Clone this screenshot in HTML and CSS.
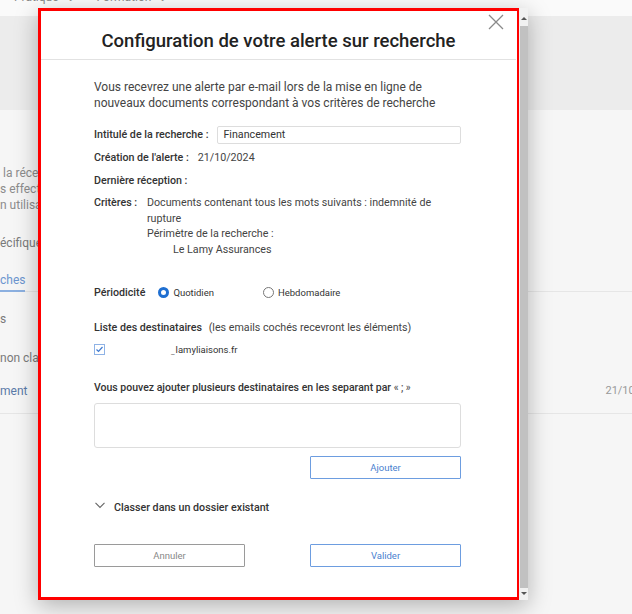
FILE: index.html
```html
<!DOCTYPE html>
<html>
<head>
    <title>Alerte sur recherche</title>
    <link rel="stylesheet" href="styles.css">
</head>
<body>
    <div class="topbar">
        <span class="nav-item">Pratique <span class="caret">&#8964;</span></span>
        <span class="nav-item">Formation <span class="caret">&#8964;</span></span>
    </div>
    <div class="band"></div>
    <div class="page">
        <div class="side">
            <p class="muted first">la réception de vos alertes</p>
            <p class="muted">s effectuées sur le fonds</p>
            <p class="muted">n utilisant les filtres</p>
            <p class="dark spaced">écifiques</p>
            <div class="tabs">
                <span class="tab-active">ches</span>
            </div>
            <p class="dark row-s">s</p>
            <p class="dark row-s2">non classées</p>
            <div class="line-row">
                <span class="link">ment</span>
                <span class="date">21/10/2024</span>
            </div>
        </div>
    </div>

    <div class="modal">
        <div class="dialog">
            <div class="dialog-header">
                <h1>Configuration de votre alerte sur recherche</h1>
                <svg class="close" width="16" height="16" viewBox="0 0 16 16">
                    <path d="M1 1 L15 15 M15 1 L1 15" stroke="#8a8a8a" stroke-width="1.3" fill="none"/>
                </svg>
            </div>
            <div class="dialog-body">
                <p class="intro">Vous recevrez une alerte par e-mail lors de la mise en ligne de nouveaux documents correspondant à vos critères de recherche</p>

                <div class="field">
                    <span class="label">Intitulé de la recherche :</span>
                    <div class="input">Financement</div>
                </div>
                <div class="field">
                    <span class="label">Création de l'alerte :</span>
                    <span class="value">21/10/2024</span>
                </div>
                <div class="field">
                    <span class="label">Dernière réception :</span>
                </div>
                <div class="criteria">
                    <span class="label">Critères :</span>
                    <div class="value">
                        <div>Documents contenant tous les mots suivants : indemnité de rupture</div>
                        <div>Périmètre de la recherche :</div>
                        <div class="indent">Le Lamy Assurances</div>
                    </div>
                </div>

                <div class="periodicity">
                    <span class="label">Périodicité</span>
                    <span class="radio checked"></span>
                    <span class="radio-text">Quotidien</span>
                    <span class="radio second"></span>
                    <span class="radio-text">Hebdomadaire</span>
                </div>

                <div class="recipients">
                    <span class="label">Liste des destinataires</span>
                    <span class="value">(les emails cochés recevront les éléments)</span>
                </div>
                <div class="email-row">
                    <svg class="checkbox" width="11" height="11" viewBox="0 0 11 11">
                        <rect x="0.5" y="0.5" width="10" height="10" fill="#fff" stroke="#8fb3e6"/>
                        <path d="M2.5 5.5 L4.5 7.5 L8.5 3" stroke="#3f7ad0" stroke-width="1.2" fill="none"/>
                    </svg>
                    <span class="mark">_</span>
                    <span class="email">lamyliaisons.fr</span>
                </div>

                <p class="add-label">Vous pouvez ajouter plusieurs destinataires en les separant par <span class="quote">« ; »</span></p>
                <div class="textarea"></div>
                <div class="add-row">
                    <button class="btn blue">Ajouter</button>
                </div>

                <div class="folder">
                    <svg width="10" height="7" viewBox="0 0 10 7">
                        <path d="M0.5 0.8 L5 5.5 L9.5 0.8" stroke="#666" stroke-width="1.1" fill="none"/>
                    </svg>
                    <span class="label">Classer dans un dossier existant</span>
                </div>

                <div class="actions">
                    <button class="btn gray">Annuler</button>
                    <button class="btn blue">Valider</button>
                </div>
            </div>
        </div>
        <div class="scrollbar">
            <span class="arrow up"></span>
            <div class="thumb"></div>
            <span class="arrow down"></span>
        </div>
    </div>
</body>
</html>
```

FILE: styles.css
```css
body {
    margin: 0;
    font-family: Roboto, "Liberation Sans", sans-serif;
    background-color: #f6f6f6;
    overflow: hidden;
}

p {
    margin: 0;
}

.topbar {
    height: 16px;
    background-color: #fafafa;
    padding-left: 14px;
    display: flex;
    gap: 22px;
    overflow: hidden;
}

.nav-item {
    color: #8a8a8a;
    font-size: 12px;
    margin-top: -10px;
}

.caret {
    margin-left: 4px;
    font-size: 11px;
}

.band {
    height: 94px;
    background-color: #ececec;
}

.page {
    padding-top: 55px;
    overflow: hidden;
}

.side {
    font-size: 12px;
    line-height: 16px;
    white-space: nowrap;
}

.muted {
    color: #8c8c8c;
}

.first {
    padding-left: 3px;
}

.dark {
    color: #7a7a7a;
}

.spaced {
    margin-top: 22px;
}

.tabs {
    margin-top: 21px;
    border-bottom: 1px solid #e6e6e6;
    padding-bottom: 3px;
}

.tab-active {
    color: #6c95cf;
    border-bottom: 2px solid #8cb0e0;
    padding-bottom: 3px;
}

.row-s {
    margin-top: 19px;
}

.row-s2 {
    margin-top: 23px;
}

.line-row {
    display: flex;
    justify-content: space-between;
    margin-top: 17px;
    padding-bottom: 14px;
    border-bottom: 1px solid #e6e6e6;
    width: 664px;
}

.link {
    color: #5a7aa8;
}

.date {
    color: #999;
    font-size: 11px;
}

/* fenetre modale */
.modal {
    position: absolute;
    left: 38px;
    top: 8px;
    width: 490px;
    height: 592px;
    display: flex;
    box-shadow: 0 6px 22px rgba(0, 0, 0, 0.28);
}

.dialog {
    flex: 1;
    border: 3px solid #f00;
    border-right-width: 2px;
    background-color: #fff;
    position: relative;
}

.dialog-header {
    padding: 18px 0 6px;
    border-bottom: 1px solid #e2e2e2;
    margin-right: 1px;
}

.dialog-header h1 {
    margin: 0;
    text-align: center;
    font-size: 18.5px;
    line-height: 24px;
    font-weight: 500;
    color: #222;
}

.close {
    position: absolute;
    right: 13px;
    top: 3px;
}

.dialog-body {
    padding-left: 53px;
    width: 367px;
    font-size: 10.7px;
    color: #444;
}

.intro {
    margin-top: 19px;
    font-size: 12px;
    line-height: 16px;
    color: #444;
    margin-bottom: 12px;
}

.label {
    font-weight: 500;
    color: #333;
}

.field {
    display: flex;
    align-items: center;
    height: 23px;
}

.field .label {
    margin-right: 9px;
}

.input {
    flex: 1;
    height: 16px;
    line-height: 16px;
    border: 1px solid #ddd;
    border-radius: 2px;
    padding-left: 5px;
    color: #333;
}

.criteria {
    display: flex;
    margin-top: 3px;
    line-height: 15.6px;
}

.criteria .label {
    width: 53px;
    flex-shrink: 0;
}

.criteria .indent {
    padding-left: 26px;
}

.periodicity {
    display: flex;
    align-items: center;
    margin-top: 27px;
    height: 16px;
}

.periodicity .label {
    margin-right: 13px;
}

.radio {
    width: 11px;
    height: 11px;
    box-sizing: border-box;
    border-radius: 50%;
    border: 1px solid #777;
    margin-right: 4px;
}

.radio.checked {
    border: 3px solid #1f6fd1;
}

.radio.second {
    margin-left: 49px;
}

.radio-text {
    font-size: 9.5px;
    color: #333;
}

.recipients {
    margin-top: 20px;
    line-height: 16px;
}

.recipients .label {
    margin-right: 4px;
}

.email-row {
    display: flex;
    align-items: center;
    height: 16px;
    margin-top: 5px;
}

.mark {
    margin-left: 66px;
    font-size: 8px;
    color: #666;
    margin-top: 4px;
}

.email {
    margin-left: 1px;
    font-size: 9.5px;
    color: #333;
}

.add-label {
    margin-top: 23px;
    line-height: 16px;
    font-weight: 500;
    font-size: 10.5px;
    color: #333;
}

.quote {
    font-size: 10px;
    font-weight: 500;
    color: #555;
}

.textarea {
    margin-top: 7px;
    height: 43px;
    border: 1px solid #ddd;
    border-radius: 3px;
}

.add-row {
    display: flex;
    justify-content: flex-end;
    margin-top: 8px;
}

.btn {
    width: 151px;
    height: 23px;
    background-color: #fff;
    font-family: Roboto, "Liberation Sans", sans-serif;
    font-size: 9.5px;
    border-radius: 1px;
    padding: 0;
}

.btn.blue {
    border: 1px solid #6d9de0;
    color: #4a7fcf;
}

.btn.gray {
    border: 1px solid #9a9a9a;
    color: #888;
}

.folder {
    display: flex;
    align-items: center;
    gap: 9px;
    margin-top: 20px;
    height: 16px;
    padding-left: 1px;
}

.folder svg {
    margin-top: -4px;
}

.actions {
    display: flex;
    justify-content: space-between;
    margin-top: 29px;
}

/* barre de defilement */
.scrollbar {
    width: 9px;
    background-color: #f1f1f1;
    display: flex;
    flex-direction: column;
    align-items: center;
}

.thumb {
    flex: 1;
    width: 8px;
    background-color: #c1c1c1;
    margin: 6px 0 4px;
}

.arrow {
    width: 0;
    height: 0;
    border-left: 3px solid transparent;
    border-right: 3px solid transparent;
}

.arrow.up {
    border-bottom: 3px solid #555;
    margin-top: 9px;
}

.arrow.down {
    border-top: 3px solid #555;
    margin-bottom: 5px;
}
```
